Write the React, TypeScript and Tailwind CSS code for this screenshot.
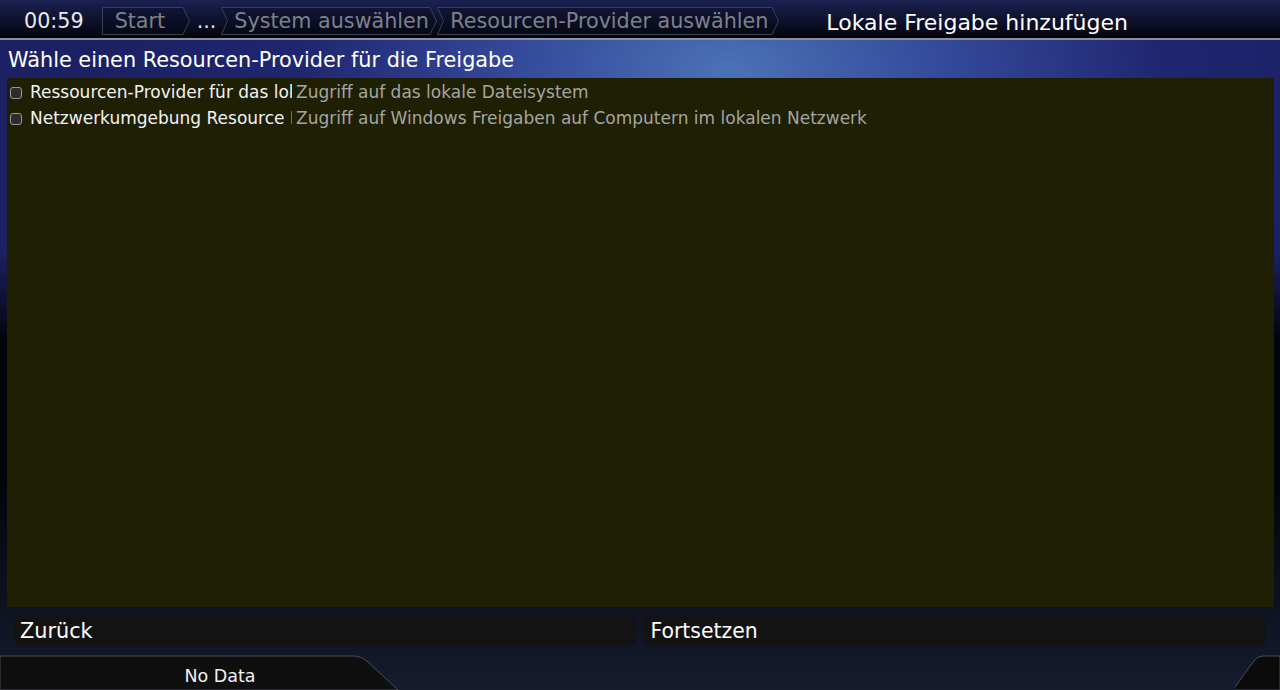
import React from "react";

const font = { fontFamily: '"DejaVu Sans", "Liberation Sans", sans-serif' };

type CrumbProps = { label: string; width: number; notch?: boolean };

function Crumb({ label, width, notch }: CrumbProps) {
  const w = width;
  const pts = notch
    ? `0.5,0.5 ${w - 7},0.5 ${w - 0.5},14 ${w - 7},27.5 0.5,27.5 6.5,14`
    : `0.5,0.5 ${w - 7},0.5 ${w - 0.5},14 ${w - 7},27.5 0.5,27.5`;
  return (
    <div className="relative h-[28px] shrink-0 flex items-center" style={{ width: w }}>
      <svg className="absolute inset-0" width={w} height={28}>
        <polygon points={pts} fill="rgba(10,12,30,0.35)" stroke="#3b4052" strokeWidth="1" />
      </svg>
      <span className="relative pl-[13px] pt-[2px] text-[20.7px] text-[#7d818c] whitespace-nowrap">{label}</span>
    </div>
  );
}

const rows = [
  {
    label: "Ressourcen-Provider für das lokale Dateisystem",
    desc: "Zugriff auf das lokale Dateisystem",
  },
  {
    label: "Netzwerkumgebung Resource Provider",
    desc: "Zugriff auf Windows Freigaben auf Computern im lokalen Netzwerk",
  },
];

export default function App() {
  return (
    <div
      className="w-[1280px] h-[690px] overflow-hidden flex flex-col text-white bg-[radial-gradient(ellipse_620px_330px_at_730px_70px,#4b72b6_0%,#34499a_35%,#1f2670_70%,rgba(28,33,96,0)_100%),linear-gradient(to_bottom,#1c2164_0px,#1c2164_250px,#03040c_340px,#03040c_480px,#161c2e_690px)]"
      style={font}
    >
      {/* header */}
      <div className="h-[40px] shrink-0 flex items-center pt-[4px] bg-[linear-gradient(to_bottom,#1b2152,#03040c)] border-b-2 border-[#8c9099]">
        <span className="ml-[24px] text-[20.7px] text-[#e8e8ea] pt-[2px]">00:59</span>
        <div className="ml-[18px] flex items-center">
          <Crumb label="Start" width={88} />
          <span className="ml-[7px] pt-[2px] text-[20.7px] text-[#e0e0e4]">...</span>
          <div className="ml-[5px]">
            <Crumb label="System auswählen" width={216} notch />
          </div>
          <Crumb label="Resourcen-Provider auswählen" width={342} notch />
        </div>
        <span className="ml-[47px] text-[22px] text-white pt-[2px]">Lokale Freigabe hinzufügen</span>
      </div>

      {/* subtitle */}
      <div className="h-[38px] shrink-0 flex items-center pl-[8px] text-[20.8px] pt-[4px]">
        Wähle einen Resourcen-Provider für die Freigabe
      </div>

      {/* list */}
      <div className="ml-[7px] mr-[6px] h-[529px] shrink-0 bg-[#1f1f03] pt-[2px]">
        {rows.map((r) => (
          <div key={r.label} className="h-[26px] flex items-center text-[17px]">
            <div className="ml-[3px] w-[12px] h-[12px] rounded-[3px] border border-[#9a9a9a] bg-[#2c2c2c] shrink-0" />
            <div className="ml-[8px] w-[262px] overflow-hidden whitespace-nowrap text-[#f2f2f2] shrink-0">{r.label}</div>
            <div className="ml-[4px] whitespace-nowrap text-[#a5a5a0]">{r.desc}</div>
          </div>
        ))}
      </div>

      {/* buttons */}
      <div className="mt-[9px] mx-[14px] flex gap-[8px] h-[29px] shrink-0">
        <div className="flex-1 rounded-[4px] bg-[#131313] flex items-center pl-[6px] pt-[2px] text-[20.8px]">Zurück</div>
        <div className="flex-1 rounded-[4px] bg-[#131313] flex items-center pl-[7px] pt-[2px] text-[20.4px]">Fortsetzen</div>
      </div>

      {/* footer */}
      <div className="mt-[10px] h-[35px] shrink-0 flex justify-between">
        <div className="relative w-[400px] h-[35px]">
          <svg className="absolute inset-0" width="400" height="35">
            <path d="M0,35 L0,1 L355,1 Q362,1 368,7 L398,35 Z" fill="#0f0f10" stroke="#4a4d55" strokeWidth="1" />
          </svg>
          <div className="relative h-[35px] flex items-center justify-center pt-[8px] text-[17.5px] text-[#f0f0f0]" style={{ width: 440 }}>
            No Data
          </div>
        </div>
        <div className="relative w-[45px] h-[35px]">
          <svg className="absolute inset-0" width="45" height="35">
            <path d="M45,1 L28,1 Q22,1 18,7 L-2,35 L45,35 Z" fill="#0b0b0c" stroke="#4a4d55" strokeWidth="1" />
          </svg>
        </div>
      </div>
    </div>
  );
}
